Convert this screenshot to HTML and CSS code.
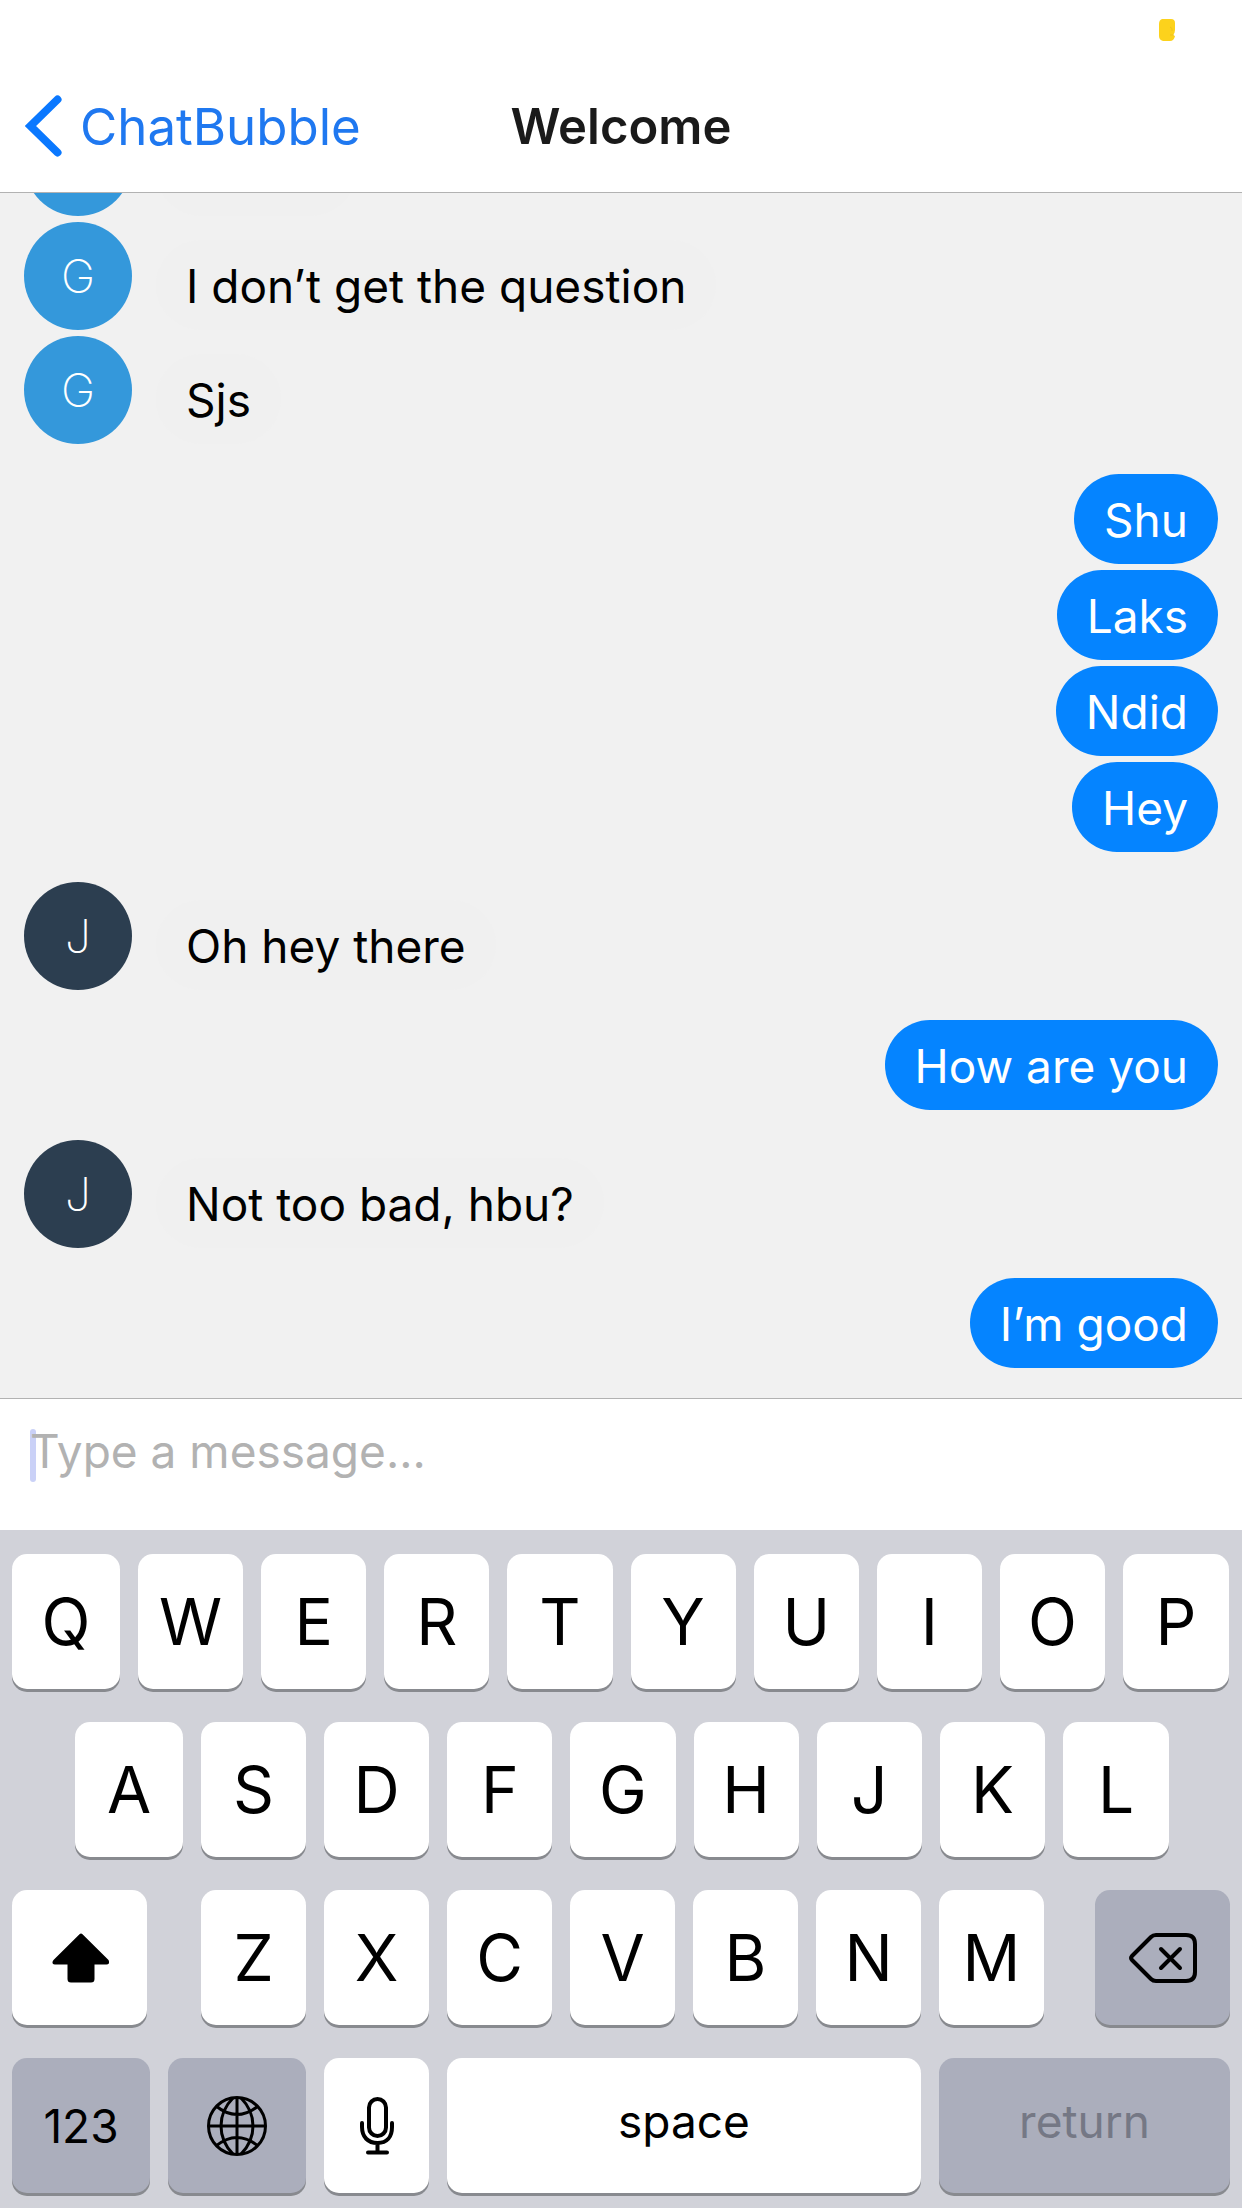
FILE: index.html
```html
<!DOCTYPE html>
<html lang="en">
<head>
<meta charset="utf-8">
<meta name="viewport" content="width=device-width, initial-scale=1">
<title>Welcome</title>
<link rel="stylesheet" href="styles.css">
</head>
<body>
<header class="header">
  <div class="status">
    <svg class="status-mark" width="16" height="24" viewBox="0 0 16 24" aria-hidden="true"><path d="M3 1h9q4 0 4 4v7q0 3-2 5l2 1q-1 5-5 5H4q-4-1-4-5V6q0-4 3-5z" fill="#fcd21c"/><path d="M11 9q3 1 2 4M11 17h4" fill="none" stroke="#f0c11c" stroke-width="1"/></svg>
  </div>
  <nav class="nav">
    <a class="back" href="#">
      <svg width="37" height="62" viewBox="0 0 37 62" aria-hidden="true"><path d="M32.500 4.500L5.500 31l27 26.500" fill="none" stroke="#0a78ff" stroke-width="8" stroke-linecap="round" stroke-linejoin="miter"/></svg>
      <span>ChatBubble</span>
    </a>
    <h1 class="title">Welcome</h1>
  </nav>
</header>

<main class="chat">
  <div class="group">
    <div class="message"><span class="avatar avatar-g"></span><p class="bubble bubble-in bubble-empty"></p></div>
    <div class="message"><span class="avatar avatar-g">G</span><p class="bubble bubble-in">I don’t get the question</p></div>
    <div class="message"><span class="avatar avatar-g">G</span><p class="bubble bubble-in">Sjs</p></div>
  </div>
  <div class="group group-out">
    <p class="bubble bubble-out">Shu</p>
    <p class="bubble bubble-out">Laks</p>
    <p class="bubble bubble-out">Ndid</p>
    <p class="bubble bubble-out">Hey</p>
  </div>
  <div class="group">
    <div class="message"><span class="avatar avatar-j">J</span><p class="bubble bubble-in">Oh hey there</p></div>
  </div>
  <div class="group group-out">
    <p class="bubble bubble-out">How are you</p>
  </div>
  <div class="group">
    <div class="message"><span class="avatar avatar-j">J</span><p class="bubble bubble-in">Not too bad, hbu?</p></div>
  </div>
  <div class="group group-out">
    <p class="bubble bubble-out">I’m good</p>
  </div>
</main>

<form class="composer">
  <span class="caret"></span>
  <input class="field" type="text" placeholder="Type a message..." aria-label="Type a message...">
</form>

<section class="keyboard">
  <div class="row row-top">
    <button class="key">Q</button><button class="key">W</button><button class="key">E</button><button class="key">R</button><button class="key">T</button><button class="key">Y</button><button class="key">U</button><button class="key">I</button><button class="key">O</button><button class="key">P</button>
  </div>
  <div class="row row-home">
    <button class="key">A</button><button class="key">S</button><button class="key">D</button><button class="key">F</button><button class="key">G</button><button class="key">H</button><button class="key">J</button><button class="key">K</button><button class="key">L</button>
  </div>
  <div class="row row-shift">
    <button class="key" aria-label="Shift">
      <svg width="58" height="50" viewBox="0 0 58 50" aria-hidden="true"><path d="M28.500 1.200q1.500-1.400 3 0L57.500 27q1 2 .3 3.500-.6 1-2.300 1H43.500V46q0 3.500-3.500 3.500H20q-3.500 0-3.500-3.500V31.500H4q-1.700 0-2.300-1Q1 29 2.500 27z"/></svg>
    </button>
    <div class="letters">
      <button class="key">Z</button><button class="key">X</button><button class="key">C</button><button class="key">V</button><button class="key">B</button><button class="key">N</button><button class="key">M</button>
    </div>
    <button class="key key-gray" aria-label="Delete">
      <svg width="68" height="50" viewBox="0 0 68 50" fill="none" stroke="#000" stroke-linecap="round" stroke-linejoin="round" aria-hidden="true"><path d="M27 2h30q9 0 9 9v28q0 9-9 9H27q-3 0-5-2L3 27q-2-2 0-4L22 4q2-2 5-2z" stroke-width="4"/><path d="M32 16l19 19M51 16L32 35" stroke-width="4"/></svg>
    </button>
  </div>
  <div class="row row-bottom">
    <button class="key key-gray key-number">123</button>
    <button class="key key-gray" aria-label="Next keyboard">
      <svg width="60" height="60" viewBox="0 0 60 60" fill="none" stroke="#000" stroke-width="3" aria-hidden="true"><circle cx="30" cy="30" r="28.500"/><path d="M30 1.500v57M1.500 30h57M26 2C10 18 10 42 26 58M34 2c16 16 16 40 0 56M9 10q21 17 42 0M9 50q21-17 42 0"/></svg>
    </button>
    <button class="key" aria-label="Dictate">
      <svg width="34" height="58" viewBox="0 0 34 58" fill="none" stroke="#000" stroke-width="4" stroke-linecap="round" aria-hidden="true"><rect x="9" y="2" width="17" height="37" rx="8.500"/><path d="M2 26v4c0 10 6 16 15.500 16S32 40 32 30v-4M17.500 46v9M8 55.500h19"/></svg>
    </button>
    <button class="key key-word">space</button>
    <button class="key key-gray key-word" disabled>return</button>
  </div>
</section>
</body>
</html>
```

FILE: styles.css
```css
* {
  box-sizing: border-box;
}

body {
  margin: 0;
  height: 100vh;
  display: flex;
  flex-direction: column;
  background: #fff;
  color: #000;
  font-family: Inter, "Liberation Sans", sans-serif;
  font-size: 46px;
}

h1,
p {
  margin: 0;
}

svg {
  display: block;
}

/* Header */

.header {
  flex: none;
  border-bottom: 1px solid #b2b2b2;
}

.status {
  height: 60px;
  padding: 18px 67px 0 0;
  display: flex;
  justify-content: flex-end;
}

.nav {
  height: 132px;
  padding: 0 25px;
  display: grid;
  grid-template-columns: 1fr auto 1fr;
  align-items: center;
}

.back {
  display: flex;
  align-items: center;
  gap: 18px;
  color: #1f78f0;
  font-size: 51px;
  text-decoration: none;
}

.title {
  font-size: 49px;
  font-weight: 600;
  color: #1a1a1a;
}

/* Conversation */

.chat {
  flex: 1;
  min-height: 0;
  overflow: hidden;
  padding: 0 24px 30px;
  display: flex;
  flex-direction: column;
  justify-content: flex-end;
  gap: 30px;
  background: #f1f1f1;
}

.group {
  display: flex;
  flex-direction: column;
  gap: 6px;
}

.group-out {
  align-items: flex-end;
}

.message {
  display: flex;
  align-items: flex-end;
  gap: 24px;
}

.avatar {
  flex: none;
  width: 108px;
  height: 108px;
  border-radius: 50%;
  display: flex;
  align-items: center;
  justify-content: center;
  color: #fff;
  font-weight: 200;
}

.avatar-g {
  background: #3498db;
}

.avatar-j {
  background: #2c3e50;
}

.bubble {
  height: 90px;
  padding: 0 30px;
  border-radius: 45px;
  line-height: 92px;
}

.bubble-in {
  background: #f0f0f0;
}

.bubble-empty {
  width: 200px;
}

.bubble-out {
  background: #0584ff;
  color: #fff;
}

/* Composer */

.composer {
  flex: none;
  position: relative;
  height: 132px;
  padding: 24px 30px;
  border-top: 1px solid #b2b2b2;
}

.caret {
  position: absolute;
  left: 30px;
  top: 30px;
  width: 6px;
  height: 53px;
  border-radius: 3px;
  background: #cad1f7;
}

.field {
  position: relative;
  display: block;
  width: 100%;
  height: 56px;
  padding: 0;
  border: 0;
  outline: 0;
  background: transparent;
  font: inherit;
}

.field::placeholder {
  color: #b2b2b2;
  opacity: 1;
}

/* Keyboard */

.keyboard {
  flex: none;
  padding: 24px 12px 15px;
  display: flex;
  flex-direction: column;
  gap: 33px;
  background: #d1d2d9;
}

.row {
  display: grid;
  gap: 18px;
}

.row-top {
  padding-right: 1px;
  grid-template-columns: 108px repeat(8, 1fr) 106px;
}

.row-home {
  padding: 0 61px 0 63px;
  grid-template-columns: 108px repeat(7, 1fr) 106px;
}

.row-shift {
  grid-template-columns: 135px 1fr 135px;
  gap: 0;
}

.letters {
  padding: 0 51px 0 54px;
  display: grid;
  grid-template-columns: repeat(7, 1fr);
  gap: 18px;
}

.row-bottom {
  grid-template-columns: 138px 138px 105px 1fr 291px;
}

.key {
  min-width: 0;
  height: 135px;
  padding: 0;
  border: 0;
  border-radius: 15px;
  display: flex;
  align-items: center;
  justify-content: center;
  background: #fff;
  box-shadow: 0 3px 0 #888a8f;
  color: #000;
  font-family: inherit;
  font-size: 64px;
}

.key-gray {
  background: #abaebc;
}

.key-number {
  font-size: 46px;
}

.key-word {
  padding-bottom: 10px;
  font-size: 46px;
}

.key:disabled {
  color: #757885;
}
```
